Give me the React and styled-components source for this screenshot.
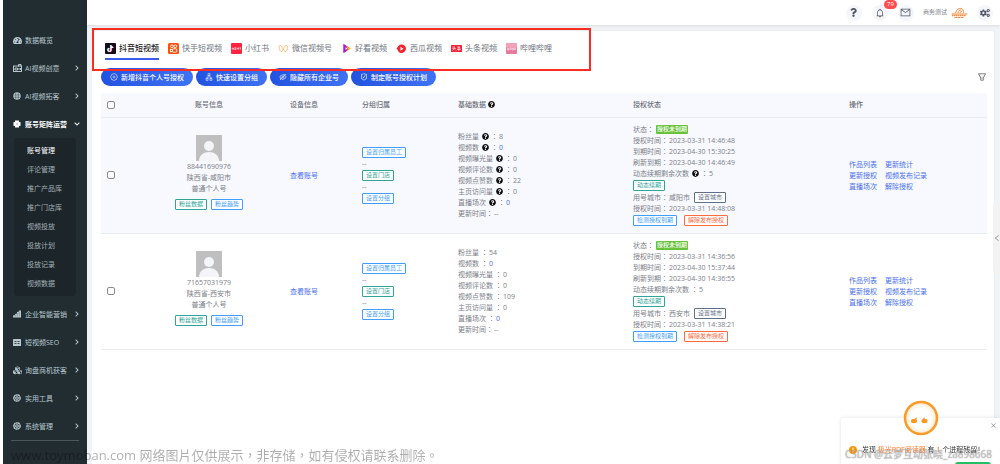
/**
 * App.jsx
 * 账号矩阵运营 - 账号管理页面
 */
import React from "react";
import styled, { createGlobalStyle, css } from "styled-components";
import {
  FaTachometerAlt,
  FaCubes,
  FaChevronRight,
  FaChevronDown,
  FaQuestion,
  FaQuestionCircle,
  FaCogs,
} from "react-icons/fa";
import {
  AiOutlineBell,
  AiOutlineMail,
  AiOutlinePlusCircle,
  AiOutlineApartment,
  AiOutlineEyeInvisible,
  AiOutlineSafetyCertificate,
  AiOutlineFilter,
  AiOutlineClose,
  AiOutlineLeft,
} from "react-icons/ai";

// ===== Icons =====

const CameraIcon = () => (
  <svg viewBox="0 0 18 16" width="9" height="8" fill="none" stroke="currentColor" strokeWidth="2">
    <rect x="1" y="4" width="16" height="11" />
    <path d="M11 5V1h5v4M4 8h5v4H4zM12 8v4M15 8v4" />
  </svg>
);

const BallIcon = () => (
  <svg viewBox="0 0 16 16" width="8" height="8">
    <circle cx="8" cy="8" r="7.5" fill="currentColor" />
    <path d="M1 6h14M1 10.5h14M5.500 1v14M10.500 1v14" stroke="#3d4a50" strokeWidth="1" fill="none" />
  </svg>
);

const ModuleIcon = () => (
  <svg viewBox="0 0 16 16" width="8" height="8" fill="currentColor">
    <path d="M4 1h8v3h3v8h-3v3H4v-3H1V4h3z" />
    <path d="M5 5l6 6M11 5l-6 6" stroke="#a5b0b4" strokeWidth="1" />
  </svg>
);

const StairsIcon = () => (
  <svg viewBox="0 0 16 16" width="8" height="8" fill="currentColor">
    <path d="M0 15v-4l4-1V8l4-1V4l4-1V1h4v14z" />
    <path d="M4.500 9v4M8.500 6v7M12.500 3v10" stroke="#222d32" strokeWidth=".6" />
  </svg>
);

const SeoIcon = () => (
  <svg viewBox="0 0 16 14" width="8" height="7">
    <rect width="16" height="14" rx="1" fill="currentColor" />
    <path d="M3 5h4M9 5h4M3 9h4M9 9h4" stroke="#222d32" strokeWidth="1.6" />
  </svg>
);

const WheelIcon = () => (
  <svg viewBox="0 0 16 16" width="8" height="8" fill="none" stroke="currentColor">
    <circle cx="8" cy="8" r="6.400" strokeWidth="2.600" strokeDasharray="4 .5" />
    <circle cx="8" cy="8" r="2.600" strokeWidth="2.200" />
    <path d="M8 2v3M8 11v3M2 8h3M11 8h3" strokeWidth="1.400" />
  </svg>
);

const DouyinIcon = () => (
  <svg viewBox="0 0 22 22" width="11" height="11">
    <rect width="22" height="22" rx="2" fill="#170b1a" />
    <g fill="none" strokeWidth="2.4">
      <path d="M11 4v9.5a3 3 0 1 1-3-3M11 5c1 2.500 2.500 3.500 5 3.500" stroke="#25f4ee" />
      <path d="M13 5v9.500a3 3 0 1 1-3-3M13 6c1 2.500 2.500 3.500 4 3.500" stroke="#fe2c55" />
      <path d="M12 4.500v9.500a3 3 0 1 1-3-3M12 5.500c1 2.500 2.500 3.500 4.500 3.500" stroke="#fff" />
    </g>
  </svg>
);

const KuaishouIcon = () => (
  <svg viewBox="0 0 22 22" width="11" height="11">
    <rect width="22" height="22" rx="3" fill="#ff4d0d" />
    <g fill="none" stroke="#fff" strokeWidth="1.8">
      <circle cx="8" cy="6.500" r="2.800" />
      <circle cx="14.500" cy="6.500" r="2.800" />
      <rect x="9" y="11.500" width="8.500" height="7" rx="2" />
      <path d="M9 13.500l-4-1.500v6l4-1.500" />
    </g>
  </svg>
);

const RedBookIcon = () => (
  <svg viewBox="0 0 22 22" width="11" height="11">
    <rect width="22" height="22" rx="2" fill="#ff2442" />
    <path d="M4 9v4M2.500 10v3M5.500 10v3M7 9.500h3M8.500 9.500v3.500M7 13h3M12 9v4M12 11h3M15 9v4M17 10h3M18.500 9v4" stroke="#fff" strokeWidth="1.200" />
  </svg>
);

const ChannelsIcon = () => (
  <svg viewBox="0 0 22 22" width="11" height="11" fill="none" stroke="#fbb25c" strokeWidth="1.600">
    <path d="M11 14C8 7 5 4 3 5s0 11 3 12 4-4 5-6 3-7 6-6 2 11-1 12-3-1-5-3z" />
  </svg>
);

const HaokanIcon = () => (
  <svg viewBox="0 0 22 22" width="11" height="11">
    <path d="M5 2l14 9-14 9z" fill="#ff3a2f" />
    <path d="M5 2v18l6-4V6z" fill="#a21be0" />
    <path d="M11 6l8 5-5 3z" fill="#ffb000" />
    <path d="M9 8.500v5l4-2.500z" fill="#fff" />
  </svg>
);

const XiguaIcon = () => (
  <svg viewBox="0 0 22 22" width="11" height="11">
    <path d="M11 3c5 0 9 4 9 8s-4 9-9 9-7-3-7.500-6L1 11l2.500-3C5 5 7 3 11 3z" fill="#f5222d" />
    <path d="M9 7.500l6 4-6 4z" fill="#fff" />
  </svg>
);

const ToutiaoIcon = () => (
  <svg viewBox="0 0 22 22" width="11" height="11">
    <rect y="4" width="22" height="14" rx="1" fill="#f8233a" />
    <path d="M3 8h3M2.500 11h7M7 7v4l-4 4M8 13l2 2M12 8h6l-5 4M14 8l5 4M12 13h7M15.500 12v4" stroke="#fff" strokeWidth="1.200" fill="none" />
  </svg>
);

const BiliIcon = () => (
  <svg viewBox="0 0 22 22" width="11" height="11">
    <rect width="22" height="22" rx="2" fill="#e8799c" />
    <rect width="22" height="9" rx="2" fill="#f3a0b9" />
    <path d="M3 9v5h3v-3H3M8 9v5M10 9v5M12 9v5h3v-3h-3M17 9v5M19 9v5" stroke="#fff" strokeWidth="1" fill="none" />
  </svg>
);

const CompanyLogo = () => (
  <svg viewBox="0 0 34 24" width="17" height="12" fill="none" stroke="#f58a3c">
    <path d="M9 12C11 5 16 2 21 3c3 1 4 4 4 8M14 12c0-4 3-7 6-6M18 12c1-3 2-4 4-3" strokeWidth="2" />
    <path d="M1 14h32" strokeWidth="2" />
    <path d="M2 17h27" strokeWidth="3" strokeDasharray="3 1" />
    <path d="M7 21h19" strokeWidth="2" strokeDasharray="5 1" />
  </svg>
);

const AvatarPicture = () => (
  <svg viewBox="0 0 26 26" width="26" height="26" role="img" aria-label="头像">
    <rect width="26" height="26" fill="#bfbfbf" />
    <circle cx="13" cy="11" r="5" fill="#f4f5f8" />
    <path d="M3 26c0-6 5-9 10-9s10 3 10 9z" fill="#f4f5f8" />
  </svg>
);

const Mascot = () => (
  <svg viewBox="0 0 36 36" width="36" height="36">
    <defs>
      <radialGradient id="face">
        <stop offset="60%" stopColor="#fff" />
        <stop offset="100%" stopColor="#ffe9cc" />
      </radialGradient>
    </defs>
    <circle cx="18" cy="18" r="16" fill="url(#face)" stroke="#fb9a26" strokeWidth="2.500" />
    <ellipse cx="11" cy="21" rx="3" ry="2.200" fill="#f8981d" />
    <ellipse cx="21.500" cy="21" rx="3" ry="2.200" fill="#f8981d" />
    <path d="M12 19l2-1M20 19l2-1" stroke="#f8981d" />
  </svg>
);

const NoticeIcon = () => (
  <svg viewBox="0 0 16 16" width="8" height="8">
    <circle cx="8" cy="8" r="8" fill="#ff9500" />
    <path d="M8 3v6M8 11v2" stroke="#fff" strokeWidth="2" />
  </svg>
);

// ===== Data =====

const MENUS_TOP = [
  { name: "数据概览", icon: <FaTachometerAlt size={9} />, leaf: true },
  { name: "AI视频创意", icon: <CameraIcon /> },
  { name: "AI视频拓客", icon: <BallIcon /> },
  { name: "账号矩阵运营", icon: <ModuleIcon />, active: true },
];

const SUB_MENUS = ["账号管理", "评论管理", "推广产品库", "推广门店库", "视频投放", "投放计划", "投放记录", "视频数据"];

const MENUS_BOTTOM = [
  { name: "企业智能营销", icon: <StairsIcon /> },
  { name: "短视频SEO", icon: <SeoIcon /> },
  { name: "询盘商机获客", icon: <FaCubes size={9} /> },
  { name: "实用工具", icon: <WheelIcon /> },
  { name: "系统管理", icon: <WheelIcon /> },
];

const TABS = [
  { name: "抖音短视频", icon: <DouyinIcon /> },
  { name: "快手短视频", icon: <KuaishouIcon /> },
  { name: "小红书", icon: <RedBookIcon /> },
  { name: "微信视频号", icon: <ChannelsIcon /> },
  { name: "好看视频", icon: <HaokanIcon /> },
  { name: "西瓜视频", icon: <XiguaIcon /> },
  { name: "头条视频", icon: <ToutiaoIcon /> },
  { name: "哔哩哔哩", icon: <BiliIcon /> },
];

const ACTIONS = [
  { name: "新增抖音个人号授权", icon: <AiOutlinePlusCircle size={8} /> },
  { name: "快速设置分组", icon: <AiOutlineApartment size={8} /> },
  { name: "隐藏所有企业号", icon: <AiOutlineEyeInvisible size={8} /> },
  { name: "制定账号授权计划", icon: <AiOutlineSafetyCertificate size={8} /> },
];

const ACCOUNTS = [
  {
    id: "88441690976",
    region: "陕西省-咸阳市",
    city: "咸阳市",
    tips: true,
    stats: [8, 0, 0, 0, 22, 0, 0],
    dates: ["2023-03-31 14:46:48", "2023-04-30 15:30:25", "2023-04-30 14:46:49"],
    cityDate: "2023-03-31 14:48:08",
  },
  {
    id: "71657031979",
    region: "陕西省-西安市",
    city: "西安市",
    tips: false,
    stats: [54, 0, 0, 0, 109, 0, 0],
    dates: ["2023-03-31 14:36:56", "2023-04-30 15:37:44", "2023-04-30 14:36:55"],
    cityDate: "2023-03-31 14:38:21",
  },
];

const STAT_NAMES = ["粉丝量", "视频数", "视频曝光量", "视频评论数", "视频点赞数", "主页访问量", "直播场次"];
const STAT_LINKS = ["视频数", "直播场次"];
const DATE_NAMES = ["授权时间", "到期时间", "刷新到期"];

const OPERATIONS = [
  ["作品列表", "更新统计"],
  ["更新授权", "视频发布记录"],
  ["直播场次", "解除授权"],
];

// ===== Components =====

const MenuEntry = ({ menu }) => (
  <MenuLink href="#" $active={menu.active}>
    <MenuIcon>{menu.icon}</MenuIcon>
    <MenuName>{menu.name}</MenuName>
    {!menu.leaf && (menu.active ? <FaChevronDown size={6} /> : <FaChevronRight size={6} />)}
  </MenuLink>
);

const Tip = () => (
  <TipIcon><FaQuestionCircle size={7} /></TipIcon>
);

const AccountRow = ({ account, striped }) => (
  <Row $striped={striped}>
    <Cell>
      <Checkbox type="checkbox" aria-label={`选择 ${account.id}`} />
    </Cell>
    <Cell $center>
      <Profile>
        <AvatarPicture />
        <Line>{account.id}</Line>
        <Line>{account.region}</Line>
        <Line>普通个人号</Line>
        <ProfileTags>
          <Tag $color="#2fa59a">粉丝数据</Tag>
          <Tag $color="#409eff">粉丝趋势</Tag>
        </ProfileTags>
      </Profile>
    </Cell>
    <Cell $center>
      <TextLink href="#">查看账号</TextLink>
    </Cell>
    <Cell>
      <TagLine><Tag $color="#409eff">设置归属员工</Tag></TagLine>
      <Line>--</Line>
      <TagLine><Tag $color="#2fa59a">设置门店</Tag></TagLine>
      <Line>--</Line>
      <TagLine><Tag $color="#409eff">设置分组</Tag></TagLine>
    </Cell>
    <Cell>
      {STAT_NAMES.map((name, i) => (
        <Line key={name}>
          {name}
          {account.tips && <Tip />}
          <Colon $spaced>：</Colon>
          {STAT_LINKS.includes(name) ? <TextLink href="#">{account.stats[i]}</TextLink> : account.stats[i]}
        </Line>
      ))}
      <Line>更新时间<Colon>：</Colon>--</Line>
    </Cell>
    <Cell>
      <Line>状态<Colon>：</Colon><StatusTag>授权未到期</StatusTag></Line>
      {DATE_NAMES.map((name, i) => (
        <Line key={name}>{name}<Colon>：</Colon>{account.dates[i]}</Line>
      ))}
      <Line>
        动态续期剩余次数
        {account.tips && <Tip />}
        <Colon $spaced>：</Colon>5
      </Line>
      <TagLine><Tag $color="#2fa59a">动态续期</Tag></TagLine>
      <TagLine>
        用号城市<Colon>：</Colon>{account.city}
        <CityTag $color="#5d6f86">设置城市</CityTag>
      </TagLine>
      <Line>授权时间<Colon>：</Colon>{account.cityDate}</Line>
      <TagLine $gap="7px">
        <Tag $color="#409eff">检测授权到期</Tag>
        <Tag $color="#ff6b3d">解除发布授权</Tag>
      </TagLine>
    </Cell>
    <Cell>
      {OPERATIONS.map(([first, second]) => (
        <OperationLine key={first}>
          <TextLink href="#">{first}</TextLink>
          <TextLink href="#">{second}</TextLink>
        </OperationLine>
      ))}
    </Cell>
  </Row>
);

const App = () => {
  return (
    <>
      <GlobalStyle />
      <Page>
        <Sidebar>
          {MENUS_TOP.map((menu) => <MenuEntry key={menu.name} menu={menu} />)}
          <SubMenu>
            {SUB_MENUS.map((name, i) => (
              <SubMenuLink key={name} href="#" $active={i === 0}>{name}</SubMenuLink>
            ))}
          </SubMenu>
          {MENUS_BOTTOM.map((menu) => <MenuEntry key={menu.name} menu={menu} />)}
          <SidebarLine />
        </Sidebar>

        <Main>
          <Header>
            <RoundButtons>
              <RoundButton aria-label="帮助"><FaQuestion size={9} /></RoundButton>
              <RoundButton aria-label="通知">
                <AiOutlineBell size={10} />
                <Badge>79</Badge>
              </RoundButton>
              <RoundButton aria-label="消息"><AiOutlineMail size={11} /></RoundButton>
            </RoundButtons>
            <Account>商务测试<CompanyLogo /></Account>
            <RoundButton aria-label="设置"><FaCogs size={10} /></RoundButton>
          </Header>

          <Card>
            <TabBar>
              {TABS.map((tab, i) => (
                <Tab key={tab.name} $active={i === 0}>{tab.icon}{tab.name}</Tab>
              ))}
            </TabBar>
            <Toolbar>
              <Actions>
                {ACTIONS.map((action) => (
                  <ActionButton key={action.name}>{action.icon}{action.name}</ActionButton>
                ))}
              </Actions>
              <FilterButton aria-label="筛选"><AiOutlineFilter size={10} /></FilterButton>
            </Toolbar>
            <Table>
              <colgroup>
                <Col $width={61} />
                <Col $width={94} />
                <Col $width={96} />
                <Col $width={96} />
                <Col $width={175} />
                <Col $width={216} />
                <Col $width={148} />
              </colgroup>
              <thead>
                <tr>
                  <HeadCell><Checkbox type="checkbox" aria-label="全选" /></HeadCell>
                  <HeadCell $center>账号信息</HeadCell>
                  <HeadCell $center>设备信息</HeadCell>
                  <HeadCell>分组归属</HeadCell>
                  <HeadCell><HeadLabel>基础数据<FaQuestionCircle size={7} color="#111" /></HeadLabel></HeadCell>
                  <HeadCell>授权状态</HeadCell>
                  <HeadCell>操作</HeadCell>
                </tr>
              </thead>
              <tbody>
                {ACCOUNTS.map((account, i) => (
                  <AccountRow key={account.id} account={account} striped={i % 2 === 0} />
                ))}
              </tbody>
            </Table>
          </Card>
        </Main>

        <DrawerHandle aria-label="展开"><AiOutlineLeft size={8} /></DrawerHandle>

        <Notice>
          <MascotHolder><Mascot /></MascotHolder>
          <NoticeClose aria-label="关闭"><AiOutlineClose size={7} /></NoticeClose>
          <NoticeText>
            <NoticeIcon />
            <span>发现 <em>极光PDF阅读器</em> 有 <em>1</em> 个进程残留！</span>
          </NoticeText>
          <NoticeButton aria-label="清理" />
        </Notice>

        <SiteMark>www.toymoban.com 网络图片仅供展示，非存储，如有侵权请联系删除。</SiteMark>
        <AuthorMark>CSDN @云梦互动张晓_za898668</AuthorMark>
      </Page>
    </>
  );
};

// ===== Styled Components =====

const GlobalStyle = createGlobalStyle`
  * {
    box-sizing: border-box;
  }

  body {
    margin: 0;
    background: #fff;
    color: #7c8089;
    font-family: "Open Sans", "Noto Sans CJK SC", sans-serif;
    font-size: 7px;
    line-height: 11px;
  }

  button {
    padding: 0;
    border: 0;
    background: none;
    color: inherit;
    font: inherit;
    cursor: pointer;
  }

  a {
    text-decoration: none;
  }

  svg {
    flex-shrink: 0;
  }
`;

const Page = styled.div`
  display: flex;
  min-height: 100vh;
  padding-left: 3px;
  overflow: hidden;
`;

const Sidebar = styled.nav`
  flex: 0 0 84px;
  padding-top: 26px;
  background: #222d32;
`;

const MenuLink = styled.a`
  display: flex;
  align-items: center;
  height: 28px;
  padding: 0 7px 0 10px;
  color: ${({ $active }) => ($active ? "#fff" : "#b8c7ce")};
  font-weight: ${({ $active }) => ($active ? 700 : 400)};
`;

const MenuIcon = styled.span`
  display: flex;
  width: 12px;
`;

const MenuName = styled.span`
  flex: 1;
  white-space: nowrap;
`;

const SubMenu = styled.div`
  margin: 0 11px 4px;
  padding: 3px 0;
  border-radius: 4px;
  background: #1c2529;
`;

const SubMenuLink = styled.a`
  display: block;
  padding-left: 13px;
  color: ${({ $active }) => ($active ? "#fff" : "#a3b0b6")};
  line-height: 19px;
`;

const SidebarLine = styled.hr`
  margin: 0 8px;
  border: 0;
  border-top: 1px solid #4c565b;
`;

const Main = styled.main`
  display: flex;
  flex: 1;
  flex-direction: column;
  min-width: 0;
  background: #f0f4f7;
`;

const Header = styled.header`
  display: flex;
  align-items: center;
  justify-content: flex-end;
  gap: 9px;
  height: 25px;
  padding-right: 7px;
  background: #fff;
  box-shadow: 0 1px 3px rgba(0, 0, 0, 0.1);
`;

const RoundButtons = styled.div`
  display: flex;
  gap: 10px;
`;

const RoundButton = styled.button`
  position: relative;
  display: flex;
  align-items: center;
  justify-content: center;
  width: 16px;
  height: 16px;
  border-radius: 50%;
  background: #f5f6fb;
  color: #545866;
`;

const Badge = styled.span`
  position: absolute;
  top: -5px;
  left: 12px;
  padding: 0 3px;
  border-radius: 5px;
  background: #ff4d4f;
  color: #fff;
  font-size: 6px;
  line-height: 9px;
`;

const Account = styled.div`
  display: flex;
  align-items: center;
  gap: 4px;
  font-size: 6px;
`;

const Card = styled.section`
  flex: 1;
  margin: 5px 5px 0;
  padding-top: 11px;
  border: 1px solid #e8edf2;
  border-width: 1px 1px 0 0;
  border-radius: 3px 3px 0 0;
  background: #fff;
`;

const TabBar = styled.div`
  position: relative;
  display: flex;
  gap: 9px;
  width: fit-content;
  padding: 0 39px 0 13px;

  &::after {
    content: "";
    position: absolute;
    inset: -14px 0 -11px 0;
    border: 2px solid #fb2c22;
    pointer-events: none;
  }
`;

const Tab = styled.button`
  display: flex;
  align-items: center;
  gap: 3px;
  padding-bottom: 4px;
  border-bottom: 2px solid ${({ $active }) => ($active ? "#3a5ee8" : "transparent")};
  color: ${({ $active }) => ($active ? "#222" : "#6f7480")};
  font-size: 8px;
  font-weight: ${({ $active }) => ($active ? 500 : 400)};
  line-height: 12px;
  white-space: nowrap;
`;

const Toolbar = styled.div`
  display: flex;
  align-items: center;
  justify-content: space-between;
  margin: 8px 7px 7px 9px;
`;

const Actions = styled.div`
  display: flex;
  gap: 3px;
`;

const ActionButton = styled.button`
  display: flex;
  align-items: center;
  gap: 3px;
  height: 18px;
  padding: 0 9px;
  border-radius: 9px;
  background: linear-gradient(90deg, #2253e0, #3f73f5);
  color: #fff;
  font-weight: 500;
  white-space: nowrap;
`;

const FilterButton = styled.button`
  display: flex;
  color: #555;
`;

const Table = styled.table`
  width: calc(100% - 16px);
  margin-left: 9px;
  border-collapse: collapse;
  table-layout: fixed;
`;

const Col = styled.col`
  width: ${({ $width }) => $width}px;
`;

const cellBase = css`
  padding: 0 0 0 ${({ $center }) => ($center ? 0 : "10px")};
  border-bottom: 1px solid #e9edf2;
  text-align: ${({ $center }) => ($center ? "center" : "left")};
  vertical-align: middle;

  &:first-child {
    padding-left: 6px;
  }
`;

const HeadCell = styled.th`
  ${cellBase}
  height: 24px;
  background: #f8f9fe;
  color: #6b6f78;
  font-weight: 500;
`;

const HeadLabel = styled.span`
  display: flex;
  align-items: center;
  gap: 2px;
`;

const Row = styled.tr`
  background: ${({ $striped }) => ($striped ? "#f8f9fe" : "#fff")};
`;

const Cell = styled.td`
  ${cellBase}
  height: 116px;
`;

const Checkbox = styled.input`
  display: block;
  width: 8px;
  height: 8px;
  margin: 0;
  border: 1px solid #8b8b8b;
  border-radius: 2px;
  appearance: none;
  background: #fff;

  &:checked {
    background: #2f54eb;
  }
`;

const Profile = styled.div`
  display: flex;
  flex-direction: column;
  align-items: center;
  padding-bottom: 5px;
`;

const ProfileTags = styled.div`
  display: flex;
  gap: 4px;
  margin-top: 5px;
`;

const Line = styled.div`
  display: flex;
  align-items: center;
  height: 11px;
  white-space: nowrap;
`;

const TagLine = styled.div`
  display: flex;
  align-items: center;
  gap: ${({ $gap }) => $gap || 0};
  height: 12px;
  white-space: nowrap;
`;

const OperationLine = styled(Line)`
  gap: 8px;
`;

const Tag = styled.button`
  height: 11px;
  padding: 0 3px;
  border: 1px solid ${({ $color }) => $color};
  border-radius: 1px;
  background: #fff;
  color: ${({ $color }) => $color};
  font-size: 6px;
  line-height: 9px;
  white-space: nowrap;
`;

const CityTag = styled(Tag)`
  margin-left: 4px;
`;

const StatusTag = styled.span`
  margin-left: 1px;
  padding: 0 1px;
  border-radius: 1px;
  background: #67c23a;
  color: #fff;
  font-size: 6px;
  font-weight: 500;
  line-height: 9px;
`;

const TextLink = styled.a`
  color: #4a70f0;
`;

const TipIcon = styled.span`
  display: flex;
  margin-left: 3px;
  color: #111;
`;

// 冒号居中显示
const Colon = styled.span`
  margin-left: ${({ $spaced }) => ($spaced ? "2px" : 0)};
  padding-right: 1px;
  font-family: "Noto Sans CJK TC", sans-serif;
`;

const DrawerHandle = styled.button`
  position: fixed;
  top: 201px;
  right: 0;
  display: flex;
  align-items: center;
  justify-content: center;
  width: 7px;
  height: 73px;
  border-radius: 4px 0 0 4px;
  background: #f3f3f3;
  color: #888;
`;

const Notice = styled.aside`
  position: fixed;
  right: 0;
  bottom: 0;
  width: 159px;
  height: 46px;
  border-radius: 3px 0 0 0;
  background: #fff;
  box-shadow: 0 0 4px rgba(0, 0, 0, 0.12);
`;

const MascotHolder = styled.div`
  position: absolute;
  top: -18px;
  left: 62px;
  display: flex;
`;

const NoticeClose = styled.button`
  position: absolute;
  top: 4px;
  right: 3px;
  display: flex;
  color: #888;
`;

const NoticeText = styled.p`
  display: flex;
  align-items: center;
  gap: 5px;
  margin: 0;
  padding: 26px 0 0 8px;
  color: #333;
  white-space: nowrap;

  em {
    color: #ff7a2b;
    font-style: normal;
  }
`;

const NoticeButton = styled.button`
  position: absolute;
  right: 9px;
  bottom: -10px;
  width: 36px;
  height: 12px;
  border-radius: 3px;
  background: #21c064;
`;

const SiteMark = styled.div`
  position: fixed;
  bottom: 0;
  left: 11px;
  color: rgba(0, 0, 0, 0.32);
  font-family: "Open Sans", "Noto Sans CJK TC", sans-serif;
  font-size: 13px;
  line-height: 18px;
  white-space: nowrap;
  pointer-events: none;
`;

const AuthorMark = styled.div`
  position: fixed;
  right: 8px;
  bottom: 3px;
  color: rgba(255, 255, 255, 0.6);
  font-size: 10px;
  line-height: 14px;
  text-shadow: 0 0 1px rgba(0, 0, 0, 0.7);
  white-space: nowrap;
  pointer-events: none;
`;

export default App;
